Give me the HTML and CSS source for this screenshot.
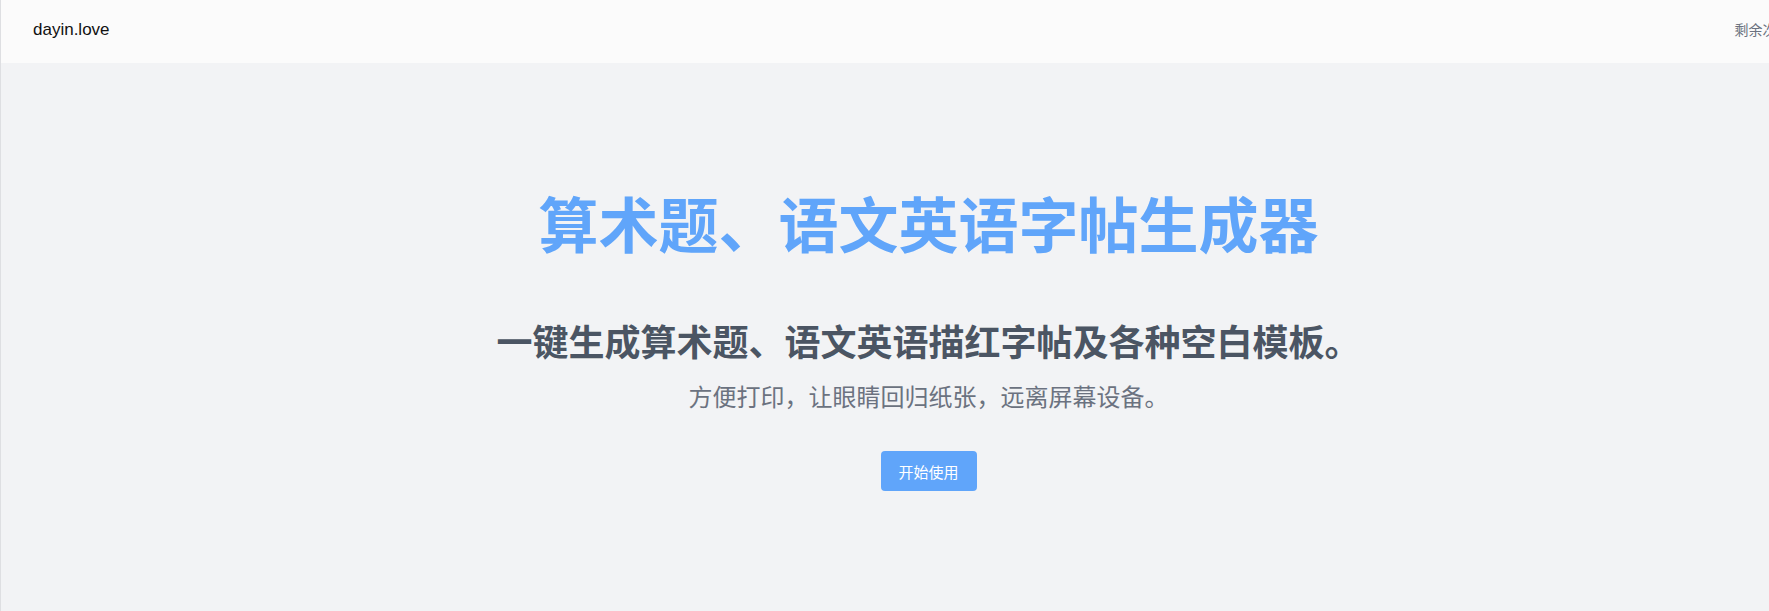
FILE: index.html
```html
<!DOCTYPE html>
<html lang="zh-CN">

<head>
  <meta charset="UTF-8">
  <meta name="viewport" content="width=device-width, initial-scale=1.0">
  <title>dayin.love</title>
  <link rel="stylesheet" href="styles.css">
</head>

<body>
  <div class="page">
    <header class="topbar">
      <a class="brand" href="#">dayin.love</a>
      <span class="quota">剩余次数：10</span>
    </header>

    <main class="hero">
      <h1 class="hero-title">算术题、语文英语字帖生成器</h1>
      <h2 class="hero-sub">一键生成算术题、语文英语描红字帖及各种空白模板。</h2>
      <p class="hero-text">方便打印，让眼睛回归纸张，远离屏幕设备。</p>
      <button class="start-btn">开始使用</button>
    </main>
  </div>
</body>

</html>
```

FILE: styles.css
```css
html,
body {
  margin: 0;
  padding: 0;
  overflow: hidden;
}

body {
  font-family: 'Liberation Sans', 'Noto Sans CJK SC', sans-serif;
  background-color: #f3f4f6;
}

.page {
  width: 1855px;
  height: 611px;
  border-left: 1px solid #dedfe2;
  background-color: #f2f3f5;
}

.topbar {
  height: 63px;
  display: flex;
  align-items: center;
  justify-content: space-between;
  padding: 0 36px 0 32px;
  background-color: #fbfbfb;
}

.brand {
  color: #111;
  font-size: 17px;
  text-decoration: none;
  margin-top: -4px;
}

.quota {
  color: #6b7280;
  font-size: 14px;
  font-family: 'Noto Sans CJK SC', sans-serif;
  margin-top: -6px;
}

.hero {
  display: flex;
  flex-direction: column;
  align-items: center;
  padding-top: 129px;
  font-family: 'Noto Sans CJK SC', sans-serif;
}

.hero-title {
  margin: 0;
  font-size: 60px;
  line-height: 60px;
  font-weight: 700;
  color: #60a5fa;
}

.hero-sub {
  margin: 68px 0 0;
  font-size: 36px;
  line-height: 40px;
  font-weight: 700;
  color: #4b5563;
}

.hero-text {
  margin: 20px 0 0;
  font-size: 24px;
  line-height: 32px;
  color: #6b7280;
}

.start-btn {
  margin-top: 39px;
  width: 96px;
  height: 40px;
  padding: 0;
  border: none;
  border-radius: 4px;
  background-color: #60a5fa;
  color: #fff;
  font-family: 'Noto Sans CJK SC', sans-serif;
  font-size: 15px;
  cursor: pointer;
}

.start-btn:hover {
  background-color: #3b82f6;
}
```
